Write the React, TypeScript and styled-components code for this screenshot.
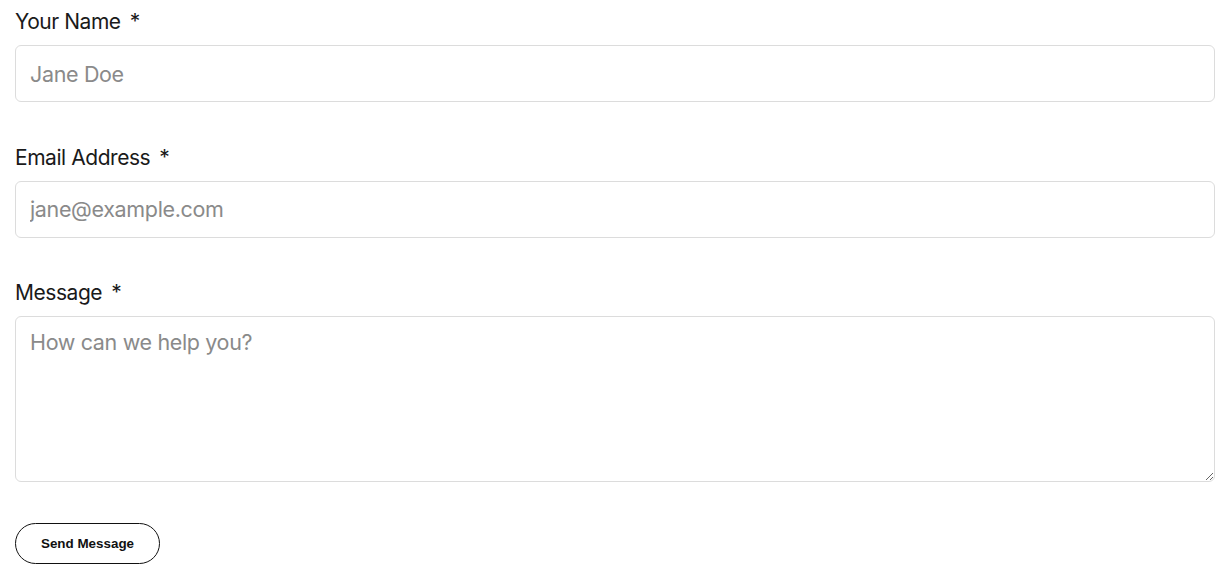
import React from "react";
import styled, { createGlobalStyle } from "styled-components";

const Global = createGlobalStyle`
  html, body { margin: 0; padding: 0; background: #ffffff; }
  * { box-sizing: border-box; }
`;

const Form = styled.form`
  display: flex;
  flex-direction: column;
  gap: 42.5px;
  padding: 9px 16px 0 15px;
  font-family: Inter, "Liberation Sans", sans-serif;
`;

const Field = styled.div`
  display: flex;
  flex-direction: column;
  gap: 11px;
`;

const Label = styled.label`
  font-size: 21px;
  line-height: 25px;
  font-weight: 400;
  color: #1a1a1a;
  letter-spacing: -0.45px;
`;

const Required = styled.span`
  margin-left: 9px;
`;

const baseInput = `
  width: 100%;
  border: 1px solid #dcdcdc;
  border-radius: 6px;
  background: #ffffff;
  font-family: Inter, "Liberation Sans", sans-serif;
  font-size: 21.5px;
  color: #1a1a1a;
  padding: 0 14px;
  outline: none;
  letter-spacing: -0.35px;
  &::placeholder { color: #8a8a8a; opacity: 1; }
`;

const Input = styled.input`
  ${baseInput}
  height: 57px;
`;

const TextArea = styled.textarea`
  ${baseInput}
  height: 166px;
  padding: 13px 14px;
  line-height: 1.2;
  resize: vertical;
  display: block;
`;

const Actions = styled.div`
  margin-top: -1.5px;
`;

const Button = styled.button`
  width: 145px;
  height: 41px;
  border: 1px solid #111111;
  border-radius: 21px;
  background: #ffffff;
  color: #111111;
  font-family: "Liberation Sans", Arial, sans-serif;
  font-weight: 700;
  font-size: 13.4px;
  cursor: pointer;
  padding: 0;
`;

export default function App() {
  return (
    <>
      <Global />
      <Form onSubmit={(e) => e.preventDefault()}>
        <Field>
          <Label htmlFor="name">
            Your Name<Required>*</Required>
          </Label>
          <Input id="name" type="text" placeholder="Jane Doe" />
        </Field>
        <Field>
          <Label htmlFor="email">
            Email Address<Required>*</Required>
          </Label>
          <Input id="email" type="email" placeholder="jane@example.com" />
        </Field>
        <Field>
          <Label htmlFor="message">
            Message<Required>*</Required>
          </Label>
          <TextArea id="message" placeholder="How can we help you?" />
        </Field>
        <Actions>
          <Button type="submit">Send Message</Button>
        </Actions>
      </Form>
    </>
  );
}
